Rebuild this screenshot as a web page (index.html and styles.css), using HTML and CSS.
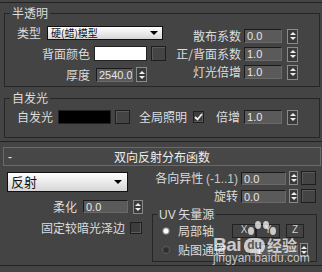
FILE: index.html
```html
<!DOCTYPE html>
<html lang="zh-CN">
<head>
    <meta charset="UTF-8">
    <title>材质参数</title>
    <link rel="stylesheet" href="styles.css">
</head>
<body>
    <div class="rollout-end first"></div>

    <!-- 半透明 -->
    <fieldset class="group trans">
        <legend>半透明</legend>
        <div class="cols">
            <div class="col-left">
                <div class="row">
                    <span class="lbl type-lbl">类型</span>
                    <div class="combo combo-small"><span>硬(蜡)模型</span><i class="arrow"></i></div>
                </div>
                <div class="row">
                    <span class="lbl wide-lbl">背面颜色</span>
                    <div class="swatch white"></div>
                    <div class="mapbtn"></div>
                </div>
                <div class="row">
                    <span class="lbl wide-lbl">厚度</span>
                    <div class="field thick">2540.0</div>
                    <span class="spin thick-spin"></span>
                </div>
            </div>
            <div class="col-right">
                <div class="row">
                    <span class="lbl coef-lbl">散布系数</span>
                    <div class="field coef">0.0</div>
                    <span class="spin coef-spin"></span>
                </div>
                <div class="row">
                    <span class="lbl coef-lbl">正/背面系数</span>
                    <div class="field coef">1.0</div>
                    <span class="spin coef-spin"></span>
                </div>
                <div class="row">
                    <span class="lbl coef-lbl">灯光倍增</span>
                    <div class="field coef">1.0</div>
                    <span class="spin coef-spin"></span>
                </div>
            </div>
        </div>
    </fieldset>

    <!-- 自发光 -->
    <fieldset class="group self">
        <legend>自发光</legend>
        <div class="row self-row">
            <span class="lbl self-lbl">自发光</span>
            <div class="swatch black"></div>
            <div class="mapbtn self-map"></div>
            <span class="lbl gi-lbl">全局照明</span>
            <span class="check on"><svg width="9" height="8" viewBox="0 0 9 8"><path d="M1 4l2.5 2.5L8 1" fill="none" stroke="#f2f2f2" stroke-width="1.8"/></svg></span>
            <span class="lbl mult-lbl">倍增</span>
            <div class="field coef">1.0</div>
            <span class="spin coef-spin"></span>
        </div>
    </fieldset>

    <div class="rollout-end"></div>

    <!-- 双向反射分布函数 -->
    <div class="rollout-head">
        <span class="minus">-</span>
        <span class="title">双向反射分布函数</span>
        <span></span>
    </div>

    <div class="brdf">
        <div class="brdf-left">
            <div class="combo combo-big"><span>反射</span><i class="arrow"></i></div>
            <div class="row soft-row">
                <span class="lbl soft-lbl">柔化</span>
                <div class="field soft">0.0</div>
                <span class="spin soft-spin"></span>
            </div>
            <div class="row fix-row">
                <span class="lbl fix-lbl">固定较暗光泽边</span>
                <span class="check"></span>
            </div>
        </div>
        <div class="brdf-right">
            <div class="row aniso-row">
                <span class="lbl aniso-lbl">各向异性 <em>(-1..1)</em></span>
                <div class="field aniso">0.0</div>
                <span class="spin aniso-spin"></span>
                <div class="mapbtn aniso-map"></div>
            </div>
            <div class="row rot-row">
                <span class="lbl aniso-lbl">旋转</span>
                <div class="field aniso">0.0</div>
                <span class="spin aniso-spin"></span>
                <div class="mapbtn aniso-map"></div>
            </div>
            <fieldset class="group uv">
                <legend><em>UV</em> 矢量源</legend>
                <div class="row uv-row">
                    <span class="radio on"></span>
                    <span class="lbl uv-lbl">局部轴</span>
                    <span class="axis axis-x">X</span>
                    <span class="axis">Y</span>
                    <span class="axis axis-z">Z</span>
                </div>
                <div class="row uv-row second">
                    <span class="radio"></span>
                    <span class="lbl uv-lbl">贴图通道</span>
                    <div class="field chan">1</div>
                    <span class="spin chan-spin"></span>
                </div>
            </fieldset>
        </div>
    </div>

    <div class="rollout-end last"></div>

    <!-- watermark -->
    <div class="watermark">
        <svg class="paw" width="30" height="16" viewBox="0 0 30 16">
            <ellipse cx="4" cy="10" rx="3" ry="4"/>
            <ellipse cx="11" cy="4" rx="3" ry="4"/>
            <ellipse cx="19" cy="4" rx="3" ry="4"/>
            <ellipse cx="26" cy="10" rx="3" ry="4"/>
        </svg>
        <div class="wm-line">
            <span class="wm-bai">Bai</span>
            <span class="wm-du">du</span>
            <span class="wm-jy">经验</span>
        </div>
        <div class="wm-url">jingyan.baidu.com</div>
    </div>
</body>
</html>
```

FILE: styles.css
```css
* {
    margin: 0;
    padding: 0;
    box-sizing: border-box;
}

body {
    width: 322px;
    height: 272px;
    overflow: hidden;
    position: relative;
    background-color: #444444;
    color: #dcdcdc;
    font-family: "Noto Sans CJK SC", sans-serif;
    font-size: 12px;
    line-height: 14px;
}

em {
    font-style: normal;
    font-family: "Liberation Sans", Arial, sans-serif;
}

.rollout-end {
    margin-top: 3px;
    border-top: 1px solid #222;
}

.rollout-end.first {
    margin-top: 0;
    height: 3px;
    border-top: none;
    border-bottom: 1px solid #222;
}

/* group boxes */
.group {
    border: 1px solid #262626;
    margin: 3px 2px 0 4px;
    padding: 0;
    min-width: 0;
}

.group legend {
    margin-left: 5px;
    padding: 0 2px;
    height: 14px;
    line-height: 14px;
}

.row {
    display: flex;
    align-items: center;
    height: 15px;
}

.lbl {
    flex: none;
    text-align: right;
    white-space: nowrap;
}

/* controls */
.field {
    flex: none;
    height: 14px;
    padding-left: 2px;
    overflow: hidden;
    white-space: nowrap;
    background-color: #5a5a5a;
    border: 1px solid;
    border-color: #1a1a1a #6a6a6a #6a6a6a #1a1a1a;
    color: #e6e6e6;
    font-family: "Liberation Sans", Arial, sans-serif;
    font-size: 11px;
    line-height: 12px;
}

.spin {
    flex: none;
    display: flex;
    flex-direction: column;
    align-items: center;
    justify-content: center;
    gap: 2px;
    width: 11px;
    height: 15px;
    background-color: #3a3a3a;
    border: 1px solid #8a8a8a;
}

.spin::before {
    content: "";
    border-left: 3px solid transparent;
    border-right: 3px solid transparent;
    border-bottom: 3px solid #eee;
}

.spin::after {
    content: "";
    border-left: 3px solid transparent;
    border-right: 3px solid transparent;
    border-top: 3px solid #eee;
}

.mapbtn {
    flex: none;
    width: 15px;
    height: 15px;
    background-color: #444;
    border: 1px solid #1e1e1e;
    box-shadow: inset 1px 1px 0 #5a5a5a;
}

.swatch {
    flex: none;
    width: 53px;
    height: 15px;
    border: 1px solid #222;
}

.swatch.white {
    background-color: #ffffff;
}

.swatch.black {
    background-color: #000000;
}

.combo {
    flex: none;
    display: flex;
    align-items: center;
    justify-content: space-between;
    background: linear-gradient(#ffffff, #d6d6d6);
    border: 1px solid #111;
    color: #111;
}

.combo .arrow {
    border-left: 4px solid transparent;
    border-right: 4px solid transparent;
    border-top: 4px solid #000;
}

.combo-small {
    margin-left: 6px;
    width: 116px;
    height: 14px;
    padding: 0 4px 0 3px;
    font-size: 10px;
}

.combo-big {
    margin: 6px 0 0 7px;
    width: 121px;
    height: 20px;
    padding: 0 5px 0 3px;
    font-size: 13px;
}

.check {
    flex: none;
    display: flex;
    align-items: center;
    justify-content: center;
    width: 12px;
    height: 12px;
    background-color: #3c3c3c;
    border: 1px solid #1e1e1e;
    box-shadow: inset -1px -1px 0 #5a5a5a;
}

.radio {
    flex: none;
    width: 8px;
    height: 8px;
    border-radius: 50%;
    background-color: #2e2e2e;
    border: 1px solid #5e5e5e;
}

.radio.on {
    background: radial-gradient(circle, #ffffff 0 2px, #b5b5b5 3px);
    border-color: #777;
}

/* 半透明 */
.cols {
    display: flex;
}

.col-left {
    width: 171px;
    padding: 5px 0 4px;
    display: flex;
    flex-direction: column;
    gap: 6px;
}

.col-right {
    padding-top: 9px;
    display: flex;
    flex-direction: column;
    gap: 4px;
}

.type-lbl {
    width: 36px;
}

.wide-lbl {
    width: 85px;
}

.swatch.white {
    margin-left: 4px;
}

.swatch.white + .mapbtn {
    margin-left: 4px;
}

.field.thick {
    margin-left: 6px;
    width: 37px;
}

.thick-spin {
    margin-left: 3px;
}

.col-right .row {
    height: 14px;
}

.coef-lbl {
    width: 65px;
}

.field.coef {
    margin-left: 3px;
    width: 38px;
}

.coef-spin {
    margin-left: 5px;
}

/* 自发光 */
.group.self {
    margin-top: 4px;
}

.self-row {
    height: 14px;
    margin: 5px 0 13px;
}

.self-lbl {
    width: 48px;
}

.swatch.black {
    margin-left: 5px;
    height: 14px;
}

.self-map {
    margin-left: 4px;
    height: 14px;
}

.gi-lbl {
    margin-left: 9px;
}

.check.on {
    margin-left: 6px;
    width: 11px;
}

.mult-lbl {
    margin-left: 12px;
}

.self-row .field.coef {
    margin-left: 4px;
}

/* rollout header */
.rollout-head {
    margin: 5px 1px 0 3px;
    height: 19px;
    display: grid;
    grid-template-columns: 1fr auto 1fr;
    align-items: center;
    background-color: #474747;
    border: 1px solid #6a6a6a;
    color: #eeeeee;
}

.minus {
    padding-left: 4px;
    font-family: "Liberation Sans", Arial, sans-serif;
}

/* 双向反射分布函数 */
.brdf {
    display: flex;
}

.brdf-left {
    width: 150px;
    flex: none;
}

.soft-row {
    margin-top: 8px;
    height: 13px;
}

.soft-lbl {
    width: 77px;
}

.field.soft {
    margin-left: 6px;
    width: 45px;
    height: 13px;
}

.soft-spin {
    margin-left: 5px;
    width: 10px;
    height: 14px;
}

.fix-row {
    margin-top: 8px;
    height: 13px;
}

.fix-lbl {
    width: 125px;
}

.fix-row .check {
    margin-left: 5px;
}

.brdf-right {
    flex: 1;
}

.aniso-row {
    margin-top: 5px;
    height: 14px;
}

.rot-row {
    margin-top: 4px;
    height: 14px;
}

.aniso-lbl {
    width: 88px;
}

.aniso-lbl em {
    color: #c8c8c8;
}

.field.aniso {
    margin-left: 3px;
    width: 45px;
    height: 13px;
}

.aniso-spin {
    margin-left: 3px;
    width: 9px;
    height: 14px;
}

.aniso-map {
    margin-left: 3px;
    height: 14px;
}

.group.uv {
    margin: 4px 5px 0 2px;
    padding: 3px 0 4px;
}

.group.uv legend {
    margin-left: 4px;
}

.uv-row {
    height: 14px;
}

.uv-row.second {
    margin-top: 5px;
}

.uv-row .radio {
    margin-left: 9px;
}

.uv-lbl {
    margin-left: 8px;
}

.axis {
    flex: none;
    width: 24px;
    height: 14px;
    border: 1px solid #222;
    text-align: center;
    font-family: "Liberation Sans", Arial, sans-serif;
    font-size: 10px;
    line-height: 9px;
    color: #cfcfcf;
}

.axis-x {
    margin-left: 18px;
}

.axis-z {
    margin-left: 6px;
    width: 18px;
}

.field.chan {
    margin-left: 23px;
    width: 49px;
    height: 12px;
    padding-left: 6px;
    line-height: 10px;
}

.chan-spin {
    margin-left: 2px;
    width: 8px;
    height: 14px;
}

/* watermark overlay */
.watermark {
    position: absolute;
    left: 213px;
    top: 221px;
    display: flex;
    flex-direction: column;
    color: rgba(255, 255, 255, 0.72);
    font-family: "Liberation Sans", Arial, sans-serif;
}

.paw {
    margin-left: 34px;
    fill: rgba(255, 255, 255, 0.72);
}

.wm-line {
    display: flex;
    align-items: center;
    height: 16px;
}

.wm-bai {
    font-size: 19px;
    font-weight: bold;
    letter-spacing: -0.5px;
}

.wm-du {
    margin-left: 3px;
    width: 21px;
    height: 15px;
    border-radius: 8px 8px 6px 6px;
    background-color: rgba(255, 255, 255, 0.72);
    color: #555;
    font-size: 12px;
    font-weight: bold;
    line-height: 15px;
    text-align: center;
}

.wm-jy {
    margin-left: 2px;
    font-family: "Noto Sans CJK SC", sans-serif;
    font-size: 15px;
    font-weight: bold;
}

.wm-url {
    font-size: 12px;
    line-height: 11px;
    color: rgba(255, 255, 255, 0.7);
}
```
